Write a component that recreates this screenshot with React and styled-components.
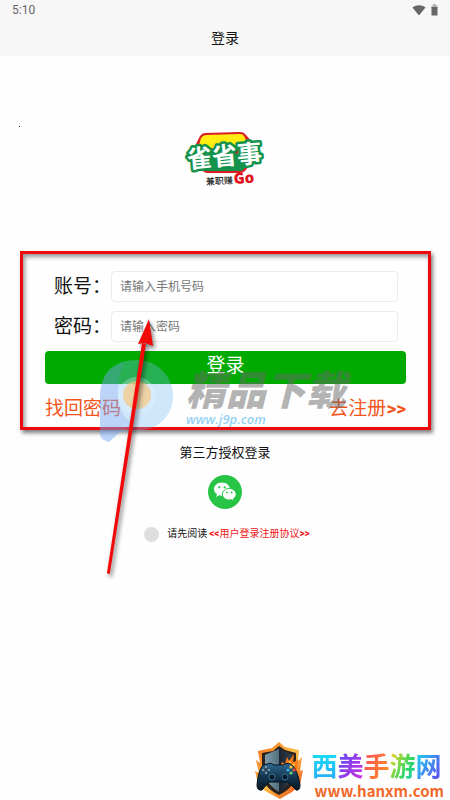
import React, { useState } from 'react';
import styled, { createGlobalStyle } from 'styled-components';

const GlobalStyle = createGlobalStyle`
  * {
    box-sizing: border-box;
  }

  body {
    margin: 0;
    background: #fefefe;
    color: #111;
    font-family: Roboto, 'Noto Sans CJK SC', sans-serif;
  }

  input, button {
    font-family: inherit;
  }
`;

const Page = styled.div`
  min-height: 100vh;
  display: flex;
  flex-direction: column;
`;

const Header = styled.header`
  background: #f7f7f7;
`;

const StatusBar = styled.div`
  display: flex;
  justify-content: space-between;
  align-items: center;
  height: 20px;
  padding: 0 12px;
  color: #666;
  font-size: 12px;
`;

const StatusIcons = styled.div`
  display: flex;
  align-items: center;
  gap: 5px;
`;

const Title = styled.h1`
  margin: 0;
  font-size: 14px;
  font-weight: 400;
  line-height: 36px;
  text-align: center;
`;

const Brand = styled.section`
  display: flex;
  flex-direction: column;
  align-items: center;
  gap: 4px;
  padding: 70px 19px 62px;
`;

const Dot = styled.span`
  align-self: flex-start;
  width: 1px;
  height: 1px;
  background: #222;
`;

const Panel = styled.form`
  position: relative;
  display: flex;
  flex-direction: column;
  gap: 9px;
  margin: 0 19px 0 20px;
  padding: 17px 22px 0;
  border: 3px solid #ee0a0c;
  box-shadow: 2px 3px 4px rgba(0, 0, 0, 0.5), inset 2px 3px 4px rgba(0, 0, 0, 0.4);
`;

const Field = styled.div`
  display: flex;
  align-items: center;
  padding: 0 8px 0 9px;

  label {
    width: 57px;
    font-size: 19px;
    line-height: 28px;
    white-space: nowrap;
  }

  input {
    flex: 1;
    min-width: 0;
    height: 31px;
    padding: 0 8px;
    border: 1px solid #ececec;
    border-radius: 4px;
    background: #fff;
    font-size: 12px;
    outline: none;
  }

  input::placeholder {
    color: #777;
  }
`;

const SubmitButton = styled.button`
  height: 33px;
  padding: 0 0 4px;
  border: 0;
  border-radius: 4px;
  background: #00aa00;
  color: #fff;
  font-size: 19px;
  line-height: 28px;
`;

const Links = styled.div`
  display: flex;
  justify-content: space-between;
  height: 34px;
  line-height: 32px;

  a {
    color: #f4551c;
    font-size: 19px;
    text-decoration: none;
  }
`;

const PinMark = styled.svg`
  position: absolute;
  left: 77px;
  top: 101px;
  pointer-events: none;
`;

const DownloadMark = styled.div`
  position: absolute;
  left: 163px;
  top: 118px;
  pointer-events: none;
  font-style: italic;
  white-space: nowrap;
`;

const DownloadName = styled.div`
  color: rgba(105, 105, 105, 0.5);
  font-size: 40px;
  font-weight: 900;
  line-height: 40px;
`;

const DownloadUrl = styled.div`
  color: rgba(110, 195, 240, 0.75);
  font-family: 'Open Sans', sans-serif;
  font-size: 13px;
  font-weight: 600;
  line-height: 14px;
`;

const Arrow = styled.svg`
  position: absolute;
  left: 77px;
  top: 62px;
  pointer-events: none;
  filter: drop-shadow(2px 3px 2px rgba(0, 0, 0, 0.5));
`;

const ThirdParty = styled.section`
  display: flex;
  flex-direction: column;
  align-items: center;
  gap: 12px;
  padding-top: 13px;

  h2 {
    margin: 0;
    font-size: 13px;
    font-weight: 400;
    line-height: 20px;
  }
`;

const WechatButton = styled.button`
  width: 34px;
  height: 34px;
  padding: 0;
  border: 0;
  border-radius: 50%;
  background: #28c445;
`;

const Agreement = styled.div`
  display: flex;
  justify-content: center;
  align-items: center;
  padding: 17px 0 24px 4px;
  font-size: 10px;
  line-height: 16px;

  input {
    appearance: none;
    width: 15px;
    height: 15px;
    margin: 0 8px 0 0;
    border-radius: 50%;
    background: #dedede;
  }

  input:checked {
    background: #28c445;
  }

  a {
    margin-left: 2px;
    color: #f01818;
    text-decoration: none;
  }
`;

const SiteMark = styled.footer`
  display: flex;
  justify-content: flex-end;
  align-items: flex-end;
  gap: 8px;
  margin-top: auto;
  padding-right: 6px;
`;

const SiteName = styled.div`
  display: flex;
  font-size: 26px;
  font-weight: 700;
  line-height: 30px;
`;

const Glyph = styled.span`
  background: ${props => props.$fill};
  background-clip: text;
  color: transparent;
`;

const SiteUrl = styled.div`
  padding-left: 3px;
  color: #f2692a;
  font-family: 'Noto Sans CJK SC', sans-serif;
  font-size: 15px;
  font-weight: 700;
  line-height: 18px;
`;

const siteGlyphs = [
  ['西', 'linear-gradient(#16e0f4, #2aa8fa)'],
  ['美', 'linear-gradient(120deg, #5a4cf5, #d42ce0)'],
  ['手', 'linear-gradient(120deg, #ff4a5c, #ff9a1c)'],
  ['游', 'linear-gradient(120deg, #ffd21a, #30d860 60%, #18c8c0)'],
  ['网', 'linear-gradient(120deg, #18d8f0, #6a3cf0)'],
];

const Wifi = () =>
  <svg width='14' height='12' viewBox='0 0 14 12'>
    <path d='M.5 3.400C4.400 .4 9.600 .4 13.500 3.400L7.600 10.800Q7 11.400 6.400 10.800Z' fill='#666' />
  </svg>;

const Battery = () =>
  <svg width='7' height='12' viewBox='0 0 7 12'>
    <path d='M2 0h3v1.500H6.500V4H.5V1.500H2z' fill='#b5b5b5' />
    <path d='M.5 3h6v8a.6.6 0 0 1-.6.6H1.100a.6.6 0 0 1-.6-.6z' fill='#666' />
  </svg>;

const BrandLogo = () =>
  <svg width='84' height='58' viewBox='0 0 84 58' role='img' aria-label='雀省事'>
    <path d='M22 2L57 1Q61 1 63 4L70 12L69 31L62 40Q60 42 57 42L25 42Q21 42 19 39L13 30L13 13L17 5Q19 2 22 2Z' fill='#d91f26' />
    <path d='M23 4L57 3Q60 3 61 5L66 15L15 18L18 7Q20 4 23 4Z' fill='#ffed12' />
    <path d='M17 24L68 22L66 32L60 39Q59 40 56 40L26 40Q22 40 21 38Z' fill='#12924a' />
    <g transform='rotate(-5 42 26)' fontFamily='Noto Sans CJK SC, sans-serif'>
      <text x='4' y='34' fontSize='25' fontWeight='700' fill='#fff' stroke='#12924a'
        strokeWidth='5' strokeLinejoin='round' paintOrder='stroke'>雀省事</text>
    </g>
    <text x='23' y='54' fontSize='9' fontWeight='500' fill='#222' transform='rotate(-3 23 54)'
      fontFamily='Noto Sans CJK SC, sans-serif'>兼职赚</text>
    <text x='51' y='53' fontSize='15' fontWeight='800' fill='#e0141e'
      transform='rotate(-4 51 53)' fontFamily='Open Sans, sans-serif'>Go</text>
  </svg>;

const Wechat = () =>
  <svg width='34' height='34' viewBox='0 0 34 34'>
    <path d='M14 7.500c-4.500 0-8 2.900-8 6.600 0 2.100 1.200 4 3 5.100l-.9 2.800 3.100-1.700c.9.2 1.800.4 2.800.4 4.400 0 7.900-2.900 7.900-6.600s-3.500-6.600-7.900-6.600z' fill='#fff' />
    <path d='M21.300 13.400c-3.800 0-6.900 2.600-6.900 5.800s3.100 5.800 6.900 5.800c.8 0 1.600-.1 2.300-.3l2.600 1.400-.7-2.400c1.600-1 2.700-2.700 2.700-4.500 0-3.200-3.100-5.800-6.900-5.800z' fill='#fff' stroke='#28c445' strokeWidth='1' />
    <g fill='#28c445'>
      <circle cx='11.300' cy='12.300' r='1.100' />
      <circle cx='16.600' cy='12.300' r='1.100' />
      <circle cx='19' cy='17.500' r='.9' />
      <circle cx='23.600' cy='17.500' r='.9' />
    </g>
  </svg>;

const Pin = () =>
  <PinMark width='76' height='90' viewBox='0 0 76 90'>
    <path d='M0 80V41Q1 5 37 5C57 5 73 21 73 41S58 75 37 76Q28 76 20 77L9 87Q1 85 0 80Z' fill='#75bdf5' fillOpacity='.34' />
    <path d='M0 80V41Q1 13 24 8Q17 21 18 45Q20 61 34 69Q26 71 20 77L9 87Q1 85 0 80Z' fill='#6f8df0' fillOpacity='.2' />
    <circle cx='37' cy='41' r='19' fill='#e8f4fc' fillOpacity='.3' />
    <circle cx='37' cy='40' r='14' fill='#f9c478' fillOpacity='.65' />
  </PinMark>;

const Shield = () =>
  <svg width='50' height='58' viewBox='0 0 50 58'>
    <defs>
      <linearGradient id='flame' x1='0' y1='0' x2='1' y2='1'>
        <stop offset='0' stopColor='#f06a16' />
        <stop offset='.5' stopColor='#ffc04a' />
        <stop offset='1' stopColor='#e8430e' />
      </linearGradient>
      <linearGradient id='steel' x1='0' y1='0' x2='1' y2='0'>
        <stop offset='0' stopColor='#7f9dac' />
        <stop offset='.5' stopColor='#54707f' />
        <stop offset='.51' stopColor='#18242f' />
        <stop offset='1' stopColor='#35434b' />
      </linearGradient>
      <linearGradient id='pad' x1='0' y1='0' x2='0' y2='1'>
        <stop offset='0' stopColor='#2f6c94' />
        <stop offset='.5' stopColor='#143650' />
        <stop offset='1' stopColor='#071724' />
      </linearGradient>
    </defs>
    <path d='M25 0L31 5L45 8L44 19L48 15L46 29L49 28L46 43L38 50L26 57L11 49L4 42L1 29L5 31L2 18L6 21L4 9L18 6Z' fill='url(#flame)' />
    <path d='M25 4L31 8L42 11V33Q40 46 25 53Q10 46 8 33V11L19 9Z' fill='#2b211d' />
    <path d='M25 7L39 13V32Q37 43 25 50Q13 43 11 32V13Z' fill='url(#steel)' />
    <path d='M25 28L28 20L31 22L33 15L35 19L40 12L39 20L44 18L43 29Z' fill='#ff7a16' />
    <path d='M29 27L32 21L34 22L36 18L37 23L41 21L39 28Z' fill='#ffd34e' />
    <path d='M13 22Q17 20 20 23H29Q34 19 39 24Q44 30 46 43Q46 49 42 48L34 40H15L8 48Q3 49 3 43Q4 29 9 23Z' fill='url(#pad)' stroke='#06121e' />
    <path d='M12 24V32M8 28H16' stroke='#7f99ac' strokeWidth='2' />
    <path d='M12 26V30M10 28H14' stroke='#0b1a28' strokeWidth='1' />
    <g fill='#0a1826' stroke='#3c86b0' strokeWidth='.8'>
      <circle cx='18' cy='35' r='3' />
      <circle cx='31' cy='35' r='3' />
    </g>
    <circle cx='37' cy='25' r='1.600' fill='#ffc43a' />
    <circle cx='40' cy='28' r='1.600' fill='#f24c3c' />
    <circle cx='34' cy='28' r='1.600' fill='#3cb4ea' />
    <circle cx='37' cy='31' r='1.600' fill='#6ad67a' />
  </svg>;

const App = () => {
  const [agreed, setAgreed] = useState(false);

  return (
    <Page>
      <GlobalStyle />
      <Header>
        <StatusBar>
          <span>5:10</span>
          <StatusIcons><Wifi /><Battery /></StatusIcons>
        </StatusBar>
        <Title>登录</Title>
      </Header>

      <Brand>
        <Dot />
        <BrandLogo />
      </Brand>

      <Panel onSubmit={e => e.preventDefault()}>
        <Field>
          <label htmlFor='account'>账号：</label>
          <input id='account' type='tel' placeholder='请输入手机号码' />
        </Field>
        <Field>
          <label htmlFor='password'>密码：</label>
          <input id='password' type='password' placeholder='请输入密码' />
        </Field>
        <SubmitButton type='submit'>登录</SubmitButton>
        <Links>
          <a href='#recover'>找回密码</a>
          <a href='#register'>去注册<b>&gt;&gt;</b></a>
        </Links>
        <Pin />
        <DownloadMark>
          <DownloadName>精品下载</DownloadName>
          <DownloadUrl>www.j9p.com</DownloadUrl>
        </DownloadMark>
        <Arrow width='60' height='262' viewBox='0 0 60 262'>
          <path d='M46 28L10 257Q9 259 7 257L42 27Z' fill='#f20a0a' />
          <path d='M49 3L53 30L45 27L38 28Z' fill='#f20a0a' />
        </Arrow>
      </Panel>

      <ThirdParty>
        <h2>第三方授权登录</h2>
        <WechatButton type='button' aria-label='微信登录'><Wechat /></WechatButton>
      </ThirdParty>

      <Agreement>
        <input id='agree' type='checkbox' checked={agreed} onChange={e => setAgreed(e.target.checked)} />
        <label htmlFor='agree'>请先阅读</label>
        <a href='#agreement'><b>&lt;&lt;</b>用户登录注册协议<b>&gt;&gt;</b></a>
      </Agreement>

      <SiteMark>
        <Shield />
        <div>
          <SiteName>
            {siteGlyphs.map(([char, fill]) => <Glyph key={char} $fill={fill}>{char}</Glyph>)}
          </SiteName>
          <SiteUrl>www.hanxm.com</SiteUrl>
        </div>
      </SiteMark>
    </Page>
  );
};

export default App;
